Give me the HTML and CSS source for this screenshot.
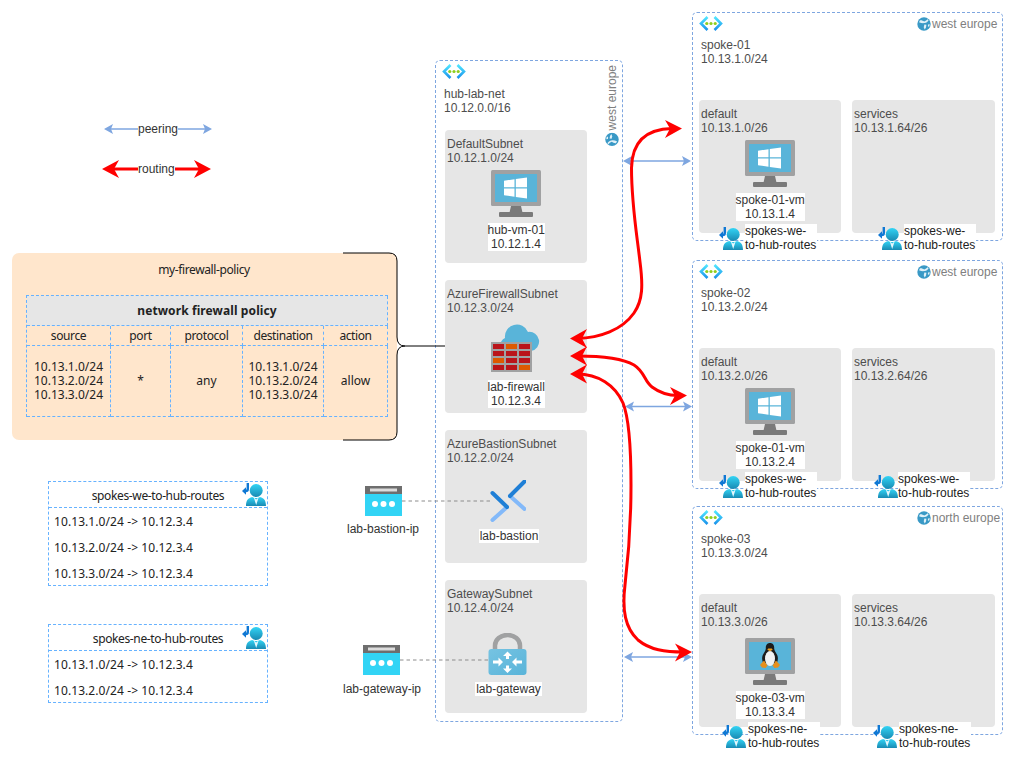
FILE: index.html
```html
<!DOCTYPE html>
<html lang="en">
<head>
<meta charset="utf-8">
<title>Hub and spoke network diagram</title>
<link rel="stylesheet" href="styles.css">
</head>
<body>
<svg class="defs" width="0" height="0" aria-hidden="true">
  <defs>
    <linearGradient id="chev" x1="0" y1="0" x2="0" y2="1"><stop offset="0" stop-color="#50e6ff"/><stop offset="1" stop-color="#1b93eb"/></linearGradient>
    <linearGradient id="person" x1="0" y1="0" x2="0" y2="1"><stop offset="0" stop-color="#32d4f5"/><stop offset="1" stop-color="#198ab3"/></linearGradient>
    <linearGradient id="gw" x1="0" y1="0" x2="1" y2="1"><stop offset="0" stop-color="#76c3e2"/><stop offset="1" stop-color="#59b4d9"/></linearGradient>
    <symbol id="i-vnet" viewBox="0 0 24 15">
      <path d="M8.500 1 2 7.500 8.500 14" fill="none" stroke="url(#chev)" stroke-width="2.600"/>
      <path d="M15.500 1 22 7.500 15.500 14" fill="none" stroke="url(#chev)" stroke-width="2.600"/>
      <circle cx="7.800" cy="7.500" r="1.600" fill="#8fce1f"/><circle cx="12" cy="7.500" r="1.600" fill="#8fce1f"/><circle cx="16.200" cy="7.500" r="1.600" fill="#8fce1f"/>
    </symbol>
    <symbol id="i-globe" viewBox="0 0 14 14">
      <circle cx="7" cy="7" r="6.700" fill="#3999c6"/>
      <path d="M3 3.200C4.700 3 6 3.600 7.200 4.600 8.600 4 9.800 3.200 10.600 2.200L11.600 3.200C10.700 4.800 9.400 5.700 7.800 6 6 6.300 4.200 6.200 2 5.200ZM7.400 7.600 9.400 7.800 9 10.400 7.700 12.400 6.700 10.200ZM11 7.400 12.800 7.200 12.200 9.800 10.900 9.400Z" fill="#dff0f8"/>
    </symbol>
    <symbol id="i-monitor" viewBox="0 0 50 47">
      <rect width="50" height="36" rx="1.500" fill="#a0a1a2"/>
      <rect x="4" y="4" width="42" height="28" fill="#59b4d9"/>
      <path d="M20 36h10l1.500 6.500h-13Z" fill="#7a7a7a"/>
      <rect x="8" y="42" width="34" height="5" rx="1" fill="#7a7a7a"/>
      <path d="M13 10.700 23.500 9.200V17.300H13ZM24.800 9 36 7.500V17.300H24.800ZM13 18.600H23.500V26.700L13 25.300ZM24.800 18.600H36V28.500L24.800 26.900Z" fill="#fff"/>
    </symbol>
    <symbol id="i-linux" viewBox="0 0 50 47">
      <rect width="50" height="36" rx="1.500" fill="#a0a1a2"/>
      <rect x="4" y="4" width="42" height="28" fill="#59b4d9"/>
      <path d="M20 36h10l1.500 6.500h-13Z" fill="#7a7a7a"/>
      <rect x="8" y="42" width="34" height="5" rx="1" fill="#7a7a7a"/>
      <path d="M25 5c-3.200 0-4.400 2.500-4.200 5.500.1 2.200-2.200 4.200-3.200 7-.8 2.500-.6 5 .6 7.500h13.600c1.200-2.500 1.400-5 .6-7.500-1-2.800-3.300-4.800-3.200-7C29.400 7.500 28.200 5 25 5Z" fill="#1c1c1c"/>
      <ellipse cx="25" cy="20.500" rx="5" ry="7.500" fill="#f2f2f2"/>
      <path d="M23.200 10.500h3.600l.9 1.300-2.700 1.500-2.700-1.500Z" fill="#f0a020"/>
      <path d="M15 27 19 22.500l3.500 5-2 2.500-3.500-.5ZM35 27 31 22.500l-3.500 5 2 2.500 3.500-.5Z" fill="#e8901c"/>
    </symbol>
    <symbol id="i-firewall" viewBox="0 0 50 50">
      <path d="M18 32a8.500 8.500 0 0 1-4-16 12 12 0 0 1 23-6 9.500 9.500 0 0 1 3 19 9 9 0 0 1-2 3Z" fill="#59b4d9"/>
      <rect x="0" y="20" width="41" height="30" fill="#a0a1a2"/>
      <g fill="#ba141a">
        <rect x="2" y="22" width="11" height="5"/><rect x="28" y="22" width="11" height="5"/>
        <rect x="2" y="29" width="11" height="5"/><rect x="15" y="29" width="11" height="5"/><rect x="28" y="29" width="11" height="5"/>
        <rect x="15" y="36" width="11" height="5"/><rect x="28" y="36" width="11" height="5"/>
        <rect x="2" y="43" width="11" height="5"/><rect x="15" y="43" width="11" height="5"/>
      </g>
      <g fill="#dd5900">
        <rect x="15" y="22" width="11" height="5"/><rect x="2" y="36" width="11" height="5"/><rect x="28" y="43" width="11" height="5"/>
      </g>
    </symbol>
    <symbol id="i-bastion" viewBox="0 0 36 42">
      <path d="M17 27 2.500 40M20 16 34.500 29" stroke="#83b9f9" stroke-width="4" stroke-linecap="round"/>
      <path d="M2.500 13 17 27M34.500 1.500 20 16" stroke="#1f7fd6" stroke-width="4" stroke-linecap="round"/>
    </symbol>
    <symbol id="i-gateway" viewBox="0 0 39 42">
      <path d="M7 17V12.500a12.500 10.500 0 0 1 25 0V17" fill="none" stroke="#a0a1a2" stroke-width="4.500"/>
      <rect x="0.500" y="16" width="38" height="26" rx="3" fill="url(#gw)"/>
      <g fill="#fff">
        <path d="M19.500 18.500 24 23H21V26H18V23H15Z"/><path d="M19.500 40 15 35.500H18V32.500H21V35.500H24Z"/>
        <path d="M15 29 10.500 33.500V30.500H5V27.500H10.500V24.500Z"/><path d="M24 29 28.500 24.500V27.500H34V30.500H28.500V33.500Z"/>
      </g>
    </symbol>
    <symbol id="i-pip" viewBox="0 0 37 30">
      <rect width="37" height="30" rx="0.500" fill="#32d4f5"/>
      <rect width="37" height="8" fill="#6e6e6e"/>
      <rect x="5" y="2.500" width="27" height="3" fill="#dcdcdc"/>
      <circle cx="10" cy="18" r="3" fill="#fff"/><circle cx="18.500" cy="18" r="3" fill="#fff"/><circle cx="27" cy="18" r="3" fill="#fff"/>
    </symbol>
    <symbol id="i-route" viewBox="0 0 24 23">
      <path d="M5.800 0V6a2 2 0 0 1-2 2H3" fill="none" stroke="#0f78d4" stroke-width="2.400"/>
      <path d="M0 8 4 4.300V11.700Z" fill="#0f78d4"/>
      <circle cx="14.200" cy="7.500" r="6.500" fill="url(#person)"/>
      <path d="M4 23c0-5 1.500-8 6.300-9 1.800 1.300 5.800 1.300 7.600 0C22.500 15 24 18 24 23Z" fill="url(#person)"/>
      <path d="M11.800 14.600 14.200 16.400l2.400-1.800L14.200 22Z" fill="#e6f7fc"/>
    </symbol>
  </defs>
</svg>

<main class="canvas">
  <section class="policy">
    <h2 class="policy-name">my-firewall-policy</h2>
    <table class="policy-table">
      <colgroup><col class="c1"><col class="c2"><col class="c3"><col class="c4"><col class="c5"></colgroup>
      <thead>
        <tr><th colspan="5" class="policy-title">network firewall policy</th></tr>
        <tr class="policy-cols"><td>source</td><td>port</td><td>protocol</td><td>destination</td><td>action</td></tr>
      </thead>
      <tbody>
        <tr class="policy-row">
          <td>10.13.1.0/24<br>10.13.2.0/24<br>10.13.3.0/24</td>
          <td>*</td>
          <td>any</td>
          <td>10.13.1.0/24<br>10.13.2.0/24<br>10.13.3.0/24</td>
          <td>allow</td>
        </tr>
      </tbody>
    </table>
  </section>

  <section class="routes routes-we">
    <header class="routes-head">spokes-we-to-hub-routes<svg class="routes-icon"><use href="#i-route"/></svg></header>
    <p>10.13.1.0/24 -&gt; 10.12.3.4</p>
    <p>10.13.2.0/24 -&gt; 10.12.3.4</p>
    <p>10.13.3.0/24 -&gt; 10.12.3.4</p>
  </section>
  <section class="routes routes-ne">
    <header class="routes-head">spokes-ne-to-hub-routes<svg class="routes-icon"><use href="#i-route"/></svg></header>
    <p>10.13.1.0/24 -&gt; 10.12.3.4</p>
    <p>10.13.2.0/24 -&gt; 10.12.3.4</p>
  </section>

  <figure class="pip pip-bastion"><svg class="pip-icon"><use href="#i-pip"/></svg><figcaption>lab-bastion-ip</figcaption></figure>
  <figure class="pip pip-gateway"><svg class="pip-icon"><use href="#i-pip"/></svg><figcaption>lab-gateway-ip</figcaption></figure>

  <section class="vnet hub">
    <div class="hub-region"><svg class="globe"><use href="#i-globe"/></svg><span>west europe</span></div>
    <svg class="vnet-icon"><use href="#i-vnet"/></svg>
    <div class="vnet-name">hub-lab-net<br>10.12.0.0/16</div>
    <div class="hub-subnets">
      <div class="subnet">
        <div class="subnet-name">DefaultSubnet<br>10.12.1.0/24</div>
        <div class="node node-vm"><svg class="monitor"><use href="#i-monitor"/></svg><div class="node-label hub-label">hub-vm-01<br>10.12.1.4</div></div>
      </div>
      <div class="subnet">
        <div class="subnet-name">AzureFirewallSubnet<br>10.12.3.0/24</div>
        <div class="node node-firewall"><svg class="firewall"><use href="#i-firewall"/></svg><div class="node-label hub-label">lab-firewall<br>10.12.3.4</div></div>
      </div>
      <div class="subnet">
        <div class="subnet-name">AzureBastionSubnet<br>10.12.2.0/24</div>
        <div class="node node-bastion"><svg class="bastion"><use href="#i-bastion"/></svg><div class="node-label">lab-bastion</div></div>
      </div>
      <div class="subnet">
        <div class="subnet-name">GatewaySubnet<br>10.12.4.0/24</div>
        <div class="node node-gateway"><svg class="gateway"><use href="#i-gateway"/></svg><div class="node-label">lab-gateway</div></div>
      </div>
    </div>
  </section>

  <section class="vnet spoke spoke-1">
    <div class="spoke-head"><svg class="vnet-icon"><use href="#i-vnet"/></svg><div class="region"><svg class="globe"><use href="#i-globe"/></svg><span>west europe</span></div></div>
    <div class="vnet-name">spoke-01<br>10.13.1.0/24</div>
    <div class="spoke-subnets">
      <div class="subnet">
        <div class="subnet-name">default<br>10.13.1.0/26</div>
        <div class="node node-vm"><svg class="monitor"><use href="#i-monitor"/></svg><div class="node-label spoke-label">spoke-01-vm<br>10.13.1.4</div></div>
        <div class="route-badge rb-1a"><svg class="rb-icon"><use href="#i-route"/></svg><span class="rb-label">spokes-we-<br>to-hub-routes</span></div>
      </div>
      <div class="subnet">
        <div class="subnet-name">services<br>10.13.1.64/26</div>
        <div class="route-badge rb-1b"><svg class="rb-icon"><use href="#i-route"/></svg><span class="rb-label">spokes-we-<br>to-hub-routes</span></div>
      </div>
    </div>
  </section>

  <section class="vnet spoke spoke-2">
    <div class="spoke-head"><svg class="vnet-icon"><use href="#i-vnet"/></svg><div class="region"><svg class="globe"><use href="#i-globe"/></svg><span>west europe</span></div></div>
    <div class="vnet-name">spoke-02<br>10.13.2.0/24</div>
    <div class="spoke-subnets">
      <div class="subnet">
        <div class="subnet-name">default<br>10.13.2.0/26</div>
        <div class="node node-vm"><svg class="monitor"><use href="#i-monitor"/></svg><div class="node-label spoke-label">spoke-01-vm<br>10.13.2.4</div></div>
        <div class="route-badge rb-2a"><svg class="rb-icon"><use href="#i-route"/></svg><span class="rb-label">spokes-we-<br>to-hub-routes</span></div>
      </div>
      <div class="subnet">
        <div class="subnet-name">services<br>10.13.2.64/26</div>
        <div class="route-badge rb-2b"><svg class="rb-icon"><use href="#i-route"/></svg><span class="rb-label">spokes-we-<br>to-hub-routes</span></div>
      </div>
    </div>
  </section>

  <section class="vnet spoke spoke-3">
    <div class="spoke-head"><svg class="vnet-icon"><use href="#i-vnet"/></svg><div class="region"><svg class="globe"><use href="#i-globe"/></svg><span>north europe</span></div></div>
    <div class="vnet-name">spoke-03<br>10.13.3.0/24</div>
    <div class="spoke-subnets">
      <div class="subnet">
        <div class="subnet-name">default<br>10.13.3.0/26</div>
        <div class="node node-vm node-vm-low"><svg class="monitor"><use href="#i-linux"/></svg><div class="node-label spoke-label">spoke-03-vm<br>10.13.3.4</div></div>
        <div class="route-badge rb-3a"><svg class="rb-icon"><use href="#i-route"/></svg><span class="rb-label">spokes-ne-<br>to-hub-routes</span></div>
      </div>
      <div class="subnet">
        <div class="subnet-name">services<br>10.13.3.64/26</div>
        <div class="route-badge rb-3b"><svg class="rb-icon"><use href="#i-route"/></svg><span class="rb-label">spokes-ne-<br>to-hub-routes</span></div>
      </div>
    </div>
  </section>

  <svg class="wires" width="1015" height="763" viewBox="0 0 1015 763" aria-hidden="true">
    <path class="brace" d="M343 253H389Q397 253 397 261V337Q397 346 405 346H445M405 346Q397 346 397 355V432Q397 440 389 440H343"/>
    <path class="dash" d="M402 501H490"/>
    <path class="dash" d="M400 660H488"/>

    <g class="peer">
      <path d="M110 129H206"/><path class="head" d="M104 129 113 124 111 129 113 134ZM212 129 203 124 205 129 203 134Z"/>
      <path d="M629 161H685"/><path class="head" d="M623 161 632 156 630 161 632 166ZM691 161 682 156 684 161 682 166Z"/>
      <path d="M631 406.500H686"/><path class="head" d="M625 406.500 634 401.500 632 406.500 634 411.500ZM692 406.500 683 401.500 685 406.500 683 411.500Z"/>
      <path d="M630 657H686"/><path class="head" d="M624 657 633 652 631 657 633 662ZM692 657 683 652 685 657 683 662Z"/>
    </g>

    <g class="route">
      <path d="M110 169H204"/><path class="head" d="M102 169 119 160 114 169 119 178ZM211 169 194 160 199 169 194 178Z"/>
      <path d="M577 338.500C600 338 622 330 634 313C643 300 643 285 640 262C637 235 631.500 205 631.500 168C632 140 648 129 672 128.500"/>
      <path class="head" d="M570 338.500 587 329 582 338.500 587 348ZM682 128.500 665 120 670 128.500 665 138Z"/>
      <path d="M577 356C600 356 622 358 634 365C645 372 644 381 652 387C660 393 668 395.500 678 395.500"/>
      <path class="head" d="M570 356 587 346.500 582 356 587 365.500ZM687 395.500 670 387 675 395.500 670 405Z"/>
      <path d="M577 374C598 374 615 385 623 403C629 418 631 445 631 485C631 530 628 560 625 585C622 610 625 628 638 640C650 650 665 652 684 652"/>
      <path class="head" d="M570 374 587 364.500 582 374 587 383.500ZM692 652 675 643.500 680 652 675 661.500Z"/>
    </g>
  </svg>

  <p class="legend-text lt-peering">peering</p>
  <p class="legend-text lt-routing">routing</p>
</main>
</body>
</html>
```

FILE: styles.css
```css
* { box-sizing: border-box; }

html, body { margin: 0; padding: 0; background: #fff; }

body {
  font-family: "Liberation Sans", Arial, sans-serif;
  font-size: 12px;
  line-height: 14px;
  color: #333;
}

.defs { position: absolute; }

.canvas {
  position: relative;
  width: 1015px;
  height: 763px;
  overflow: hidden;
}

p, h2, figure { margin: 0; }

/* Legend */
.legend-text {
  position: absolute;
  background: #fff;
  line-height: 14px;
  color: #333;
}
.lt-peering { left: 138px; top: 122px; }
.lt-routing { left: 138px; top: 162px; }

/* Firewall policy card */
.policy {
  position: absolute;
  left: 12px;
  top: 253px;
  width: 385px;
  height: 187px;
  background: #ffe6cc;
  border-radius: 7px;
  padding: 0 10px 0 14px;
  font-family: "Noto Sans", sans-serif;
  color: #222;
}
.policy-name {
  font-size: 12px;
  font-weight: 400;
  line-height: 16px;
  letter-spacing: -0.390px;
  text-align: center;
  padding: 9px 5px 17px 0;
}
.policy-table {
  width: 362px;
  height: 122px;
  border-collapse: separate;
  border-spacing: 0;
  border-top: 1px dashed #66b2ff;
  border-left: 1px dashed #66b2ff;
  table-layout: fixed;
  font-size: 12px;
  line-height: 14px;
  text-align: center;
}
.policy-table th, .policy-table td {
  border-right: 1px dashed #66b2ff;
  border-bottom: 1px dashed #66b2ff;
  padding: 0;
  font-weight: 400;
}
.policy-table .policy-title {
  height: 30px;
  background: #e6e6e6;
  font-weight: 700;
  letter-spacing: 0.100px;
}
.policy-cols td {
  height: 20px;
  letter-spacing: -0.400px;
}
.c1 { width: 84px; }
.c2 { width: 60px; }
.c3 { width: 72px; }
.c4 { width: 81px; }
.c5 { width: 64px; }

/* Route tables */
.routes {
  position: absolute;
  left: 48px;
  width: 220px;
  border: 1px dashed #66b2ff;
  font-family: "Noto Sans", sans-serif;
  color: #222;
}
.routes-we { top: 481px; height: 105px; }
.routes-ne { top: 624px; height: 79px; }
.routes-head {
  position: relative;
  height: 26px;
  border-bottom: 1px dashed #66b2ff;
  line-height: 27px;
  letter-spacing: -0.370px;
  text-align: center;
}
.routes p {
  height: 26px;
  line-height: 27px;
  letter-spacing: 0.080px;
  padding-left: 5px;
}
.routes-icon {
  position: absolute;
  right: 1px;
  top: 1px;
  width: 24px;
  height: 23px;
}

/* Public IPs */
.pip {
  position: absolute;
  width: 90px;
  text-align: center;
}
.pip-bastion { left: 338px; top: 486px; }
.pip-gateway { left: 338px; top: 645px; }
.pip-icon { display: block; width: 37px; height: 30px; }
.pip-bastion .pip-icon { margin: 0 0 0 27px; }
.pip-gateway .pip-icon { margin: 0 0 0 25px; }
.pip-bastion figcaption { margin-top: 6px; }
.pip-gateway figcaption { margin-top: 7px; margin-left: -2px; }

/* Virtual networks */
.vnet {
  position: absolute;
  border: 1px dashed #7ea6e0;
  border-radius: 5px;
}
.vnet-icon { display: block; width: 24px; height: 15px; }
.vnet-name { color: #4d4d4d; }

.hub {
  left: 435px;
  top: 60px;
  width: 188px;
  height: 662px;
  padding: 3px 0 0 6px;
}
.hub .vnet-name { margin: 8px 0 0 2px; }
.hub-subnets {
  display: flex;
  flex-direction: column;
  gap: 17px;
  margin: 15px 0 0 3px;
}
.hub-subnets .subnet { width: 142px; height: 133px; }
.hub-region {
  position: absolute;
  right: 3px;
  top: 4px;
  display: flex;
  align-items: center;
  gap: 2px;
  writing-mode: vertical-rl;
  transform: rotate(180deg);
  white-space: nowrap;
  color: #808080;
}

.spoke {
  left: 692px;
  width: 311px;
  height: 229px;
  padding: 3px 4px 0 6px;
}
.spoke-1 { top: 12px; }
.spoke-2 { top: 260px; }
.spoke-3 { top: 506px; }
.spoke-head {
  display: flex;
  justify-content: space-between;
  align-items: flex-start;
}
.spoke .vnet-name { margin: 7px 0 0 2px; }
.spoke-subnets {
  display: grid;
  grid-template-columns: 142px 143px;
  column-gap: 11px;
  margin-top: 34px;
  height: 133px;
}
.region {
  display: flex;
  align-items: center;
  gap: 1px;
  width: 81px;
  margin-top: 1px;
  white-space: nowrap;
  color: #808080;
}
.globe { display: block; width: 14px; height: 14px; flex: none; }

/* Subnets */
.subnet {
  position: relative;
  background: #e6e6e6;
  border-radius: 4px;
  padding-top: 7px;
}
.subnet-name { padding-left: 2px; color: #4d4d4d; }

.node {
  display: flex;
  flex-direction: column;
  align-items: center;
  color: #333;
}
.node-label {
  background: #fff;
  text-align: center;
  white-space: nowrap;
}
.hub-label { width: 57px; }
.spoke-label { width: 69px; }

.node-vm { margin-top: 5px; }
.node-vm-low { margin-top: 9px; }
.node-vm .node-label { margin-top: 6px; }
.monitor { display: block; width: 50px; height: 47px; }

.node-firewall { margin-top: 7px; }
.firewall { display: block; width: 50px; height: 50px; }
.node-firewall .node-label { margin-top: 8px; }

.node-bastion { margin-top: 15px; margin-right: 14px; }
.bastion { display: block; width: 36px; height: 42px; margin-right: 3px; }
.node-bastion .node-label { margin-top: 7px; padding: 0 1px; }

.node-gateway { margin-top: 18px; margin-right: 15px; }
.gateway { display: block; width: 39px; height: 42px; margin-right: 2px; }
.node-gateway .node-label { margin-top: 7px; padding: 0 1px; }

/* Route table badges sitting over the subnet edge */
.route-badge {
  position: absolute;
  display: flex;
  align-items: flex-start;
}
.rb-icon { display: block; width: 24px; height: 23px; margin-top: 3px; flex: none; }
.rb-label {
  display: block;
  width: 72px;
  height: 29px;
  background: #fff;
  white-space: nowrap;
  color: #222;
}
.rb-1a { left: 20px; top: 124px; gap: 2px; }
.rb-1b { left: 26px; top: 124px; gap: 2px; }
.rb-2a { left: 20px; top: 124px; gap: 2px; }
.rb-2b { left: 22px; top: 124px; gap: 0; }
.rb-3a { left: 23px; top: 128px; gap: 2px; }
.rb-3b { left: 21px; top: 128px; gap: 2px; }

/* Wires and arrows */
.wires {
  position: absolute;
  left: 0;
  top: 0;
  pointer-events: none;
}
.wires path { fill: none; }
.brace { stroke: #000; stroke-width: 1; }
.dash { stroke: #8c8c8c; stroke-width: 1; stroke-dasharray: 3.500 3; }
.peer path { stroke: #7ea6e0; stroke-width: 1.500; }
.wires .peer .head { fill: #7ea6e0; stroke: none; }
.route path { stroke: #ff0000; stroke-width: 3; }
.wires .route .head { fill: #ff0000; stroke: none; }
```
